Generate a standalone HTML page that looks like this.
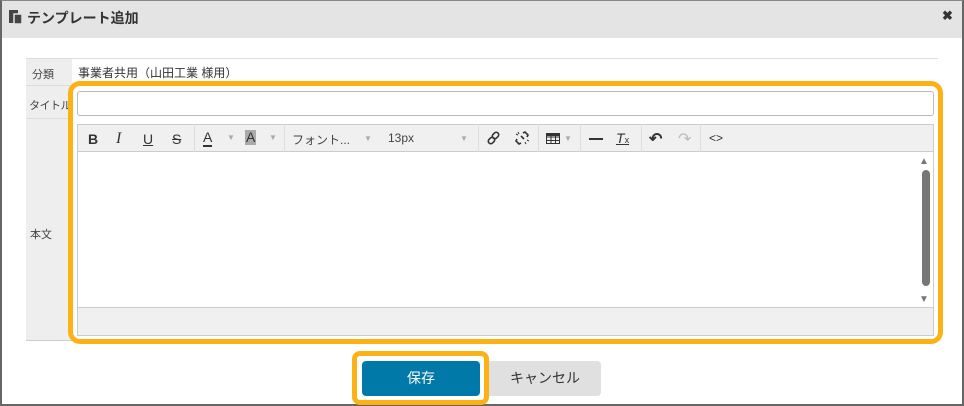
<!DOCTYPE html><html><head><meta charset="utf-8"><style>
*{box-sizing:border-box;margin:0;padding:0}
body{width:964px;height:406px;background:#fff;position:relative;overflow:hidden;font-family:"Liberation Sans","Noto Sans CJK JP",sans-serif;color:#333}
.a{position:absolute}
.frame{left:0;top:0;width:964px;height:406px;border:2px solid #666;border-top:1px solid #888}
.hdr{left:2px;top:1px;width:960px;height:37px;background:#e4e4e4}
.lbl{background:#eeeeee;font-size:11px;color:#444;white-space:nowrap}
.tb{font-size:14px;color:#333}
.sep{width:1px;height:26px;background:#ddd;top:126px}
</style></head><body>
<div class="a frame"></div>
<div class="a hdr"></div>
<svg class="a" style="left:9px;top:9px" width="14" height="16"><rect x="0" y="1" width="9" height="13" fill="#444"/><rect x="5" y="5" width="8" height="10" fill="#444" stroke="#e4e4e4" stroke-width="1.5"/></svg>
<div class="a" style="left:27px;top:8px;font-size:14px;font-weight:bold;color:#333">テンプレート追加</div>
<div class="a" style="left:942px;top:8px;font-size:13px;font-weight:bold;color:#333">✖</div>
<div class="a" style="left:26px;top:58px;width:912px;height:1px;background:#ddd"></div>
<div class="a lbl" style="left:26px;top:59px;width:46px;height:282px;border-bottom:1px solid #ccc"></div>
<div class="a" style="left:26px;top:85px;width:912px;height:1px;background:#ddd"></div>
<div class="a" style="left:26px;top:118px;width:46px;height:1px;background:#ddd"></div>
<div class="a lbl" style="left:32px;top:66px;background:none">分類</div>
<div class="a lbl" style="left:29px;top:97px;background:none;letter-spacing:-0.5px">タイトル</div>
<div class="a lbl" style="left:30px;top:226px;background:none">本文</div>
<div class="a" style="left:78px;top:64px;font-size:12px;color:#333">事業者共用（山田工業 様用）</div>
<div class="a" style="left:77px;top:91px;width:857px;height:25px;border:1px solid #bbb;border-radius:3px;background:#fff"></div>
<div class="a" style="left:77px;top:124px;width:857px;height:212px;border:1px solid #ccc;background:#fff"></div>
<div class="a" style="left:78px;top:125px;width:855px;height:27px;background:#f0f0f0;border-bottom:1px solid #ccc"></div>
<div class="a tb" style="left:88px;top:131px;font-weight:bold">B</div>
<div class="a tb" style="left:116px;top:130px;font-style:italic;font-family:'Liberation Serif',serif;font-size:16px">I</div>
<div class="a tb" style="left:143px;top:131px;text-decoration:underline">U</div>
<div class="a tb" style="left:172px;top:131px;text-decoration:line-through">S</div>
<div class="a sep" style="left:194px"></div>
<div class="a tb" style="left:203px;top:130px;border-bottom:2px solid #333;line-height:15px">A</div>
<div class="a" style="left:227px;top:133px;font-size:8px;color:#aaa">▼</div>
<div class="a tb" style="left:245px;top:130px;background:#aaa;line-height:15px;padding:0 1px">A</div>
<div class="a" style="left:269px;top:133px;font-size:8px;color:#aaa">▼</div>
<div class="a sep" style="left:284px"></div>
<div class="a" style="left:292px;top:131px;font-size:12px;color:#444">フォント...</div>
<div class="a" style="left:364px;top:134px;font-size:8px;color:#aaa">▼</div>
<div class="a" style="left:388px;top:131px;font-size:12px;color:#444">13px</div>
<div class="a" style="left:460px;top:134px;font-size:8px;color:#aaa">▼</div>
<div class="a sep" style="left:478px"></div>
<svg class="a" style="left:487px;top:131px" width="14" height="14" fill="none" stroke="#333" stroke-width="1.6"><rect x="6" y="1" width="5" height="7" rx="2.5" transform="rotate(45 8.5 4.5)"/><rect x="2" y="6" width="5" height="7" rx="2.5" transform="rotate(45 4.5 9.5)"/></svg>
<svg class="a" style="left:515px;top:131px" width="14" height="14" fill="none" stroke="#333" stroke-width="1.6"><path d="M8 2l2-1 3 3-1 2M6 12l-2 1-3-3 1-2M9 8l-3-3" /><path d="M1 3l2 1M11 13l-1-2M12 9l2 1M3 1l1 2" stroke-width="1"/></svg>
<div class="a sep" style="left:538px"></div>
<svg class="a" style="left:546px;top:133px" width="14" height="11"><rect x="0.5" y="0.5" width="13" height="10" fill="none" stroke="#333"/><path d="M0 4h14M0 7.5h14M5 0v11M9.5 0v11" stroke="#333"/><rect x="0" y="0" width="14" height="3" fill="#333"/></svg>
<div class="a" style="left:564px;top:134px;font-size:8px;color:#aaa">▼</div>
<div class="a sep" style="left:580px"></div>
<div class="a" style="left:589px;top:138px;width:14px;height:2px;background:#333"></div>
<div class="a tb" style="left:616px;top:130px;font-style:italic;text-decoration:underline">T<span style="font-size:9px;font-style:normal">x</span></div>
<div class="a sep" style="left:641px"></div>
<div class="a" style="left:649px;top:129px;font-size:16px;color:#333;font-weight:bold">↶</div>
<div class="a" style="left:678px;top:129px;font-size:16px;color:#bbb">↷</div>
<div class="a sep" style="left:700px"></div>
<div class="a" style="left:709px;top:131px;font-size:12px;color:#333">&lt;&gt;</div>
<div class="a" style="left:919px;top:156px;font-size:10px;color:#777">▲</div>
<div class="a" style="left:922px;top:170px;width:8px;height:116px;background:#777;border-radius:4px"></div>
<div class="a" style="left:919px;top:294px;font-size:10px;color:#777">▼</div>
<div class="a" style="left:78px;top:307px;width:855px;height:28px;background:#f0f0f0;border-top:1px solid #ccc"></div>
<div class="a" style="left:68px;top:81px;width:875px;height:263px;border:5px solid #fcb215;border-radius:12px"></div>
<div class="a" style="left:352px;top:351px;width:137px;height:54px;border:5px solid #fcb215;border-radius:8px"></div>
<div class="a" style="left:362px;top:361px;width:118px;height:35px;background:#0079a8;border-radius:4px;color:#fff;font-size:14px;text-align:center;line-height:35px">保存</div>
<div class="a" style="left:489px;top:361px;width:112px;height:35px;background:#e0e0e0;border-radius:0 4px 4px 0;color:#333;font-size:14px;text-align:center;line-height:35px">キャンセル</div>
</body></html>
